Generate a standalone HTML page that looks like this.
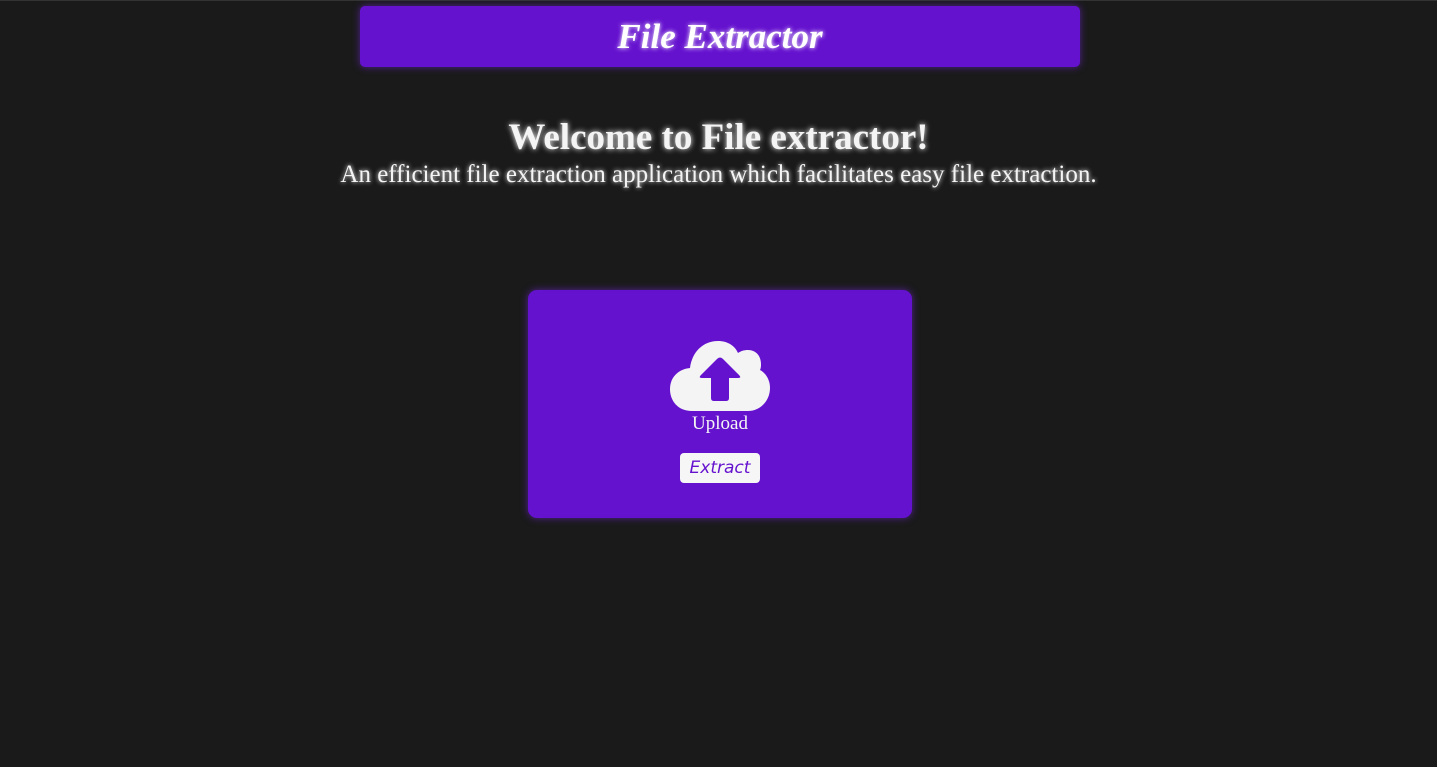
<!DOCTYPE html>
<html><head><meta charset="utf-8"><style>
html,body{margin:0;padding:0;background:#1a1a1a;width:1437px;height:767px;overflow:hidden;font-family:"Liberation Serif",serif;}
body{border-top:1px solid #333;box-sizing:border-box;}
.hdr{position:absolute;left:360px;top:6px;width:720px;height:61px;background:#6512cf;border-radius:5px;box-shadow:0 0 8px rgba(120,40,230,.6);text-align:center;color:#fff;font:italic bold 35px "Liberation Serif",serif;line-height:61px;text-shadow:0 0 5px #fff;}
h1{position:absolute;left:0;width:1437px;top:116px;margin:0;text-align:center;color:#f4f4f4;font:bold 37px "Liberation Serif",serif;text-shadow:0 0 6px #fff;}
.sub{position:absolute;left:0;width:1437px;top:161px;text-align:center;color:#f4f4f4;font:25px "Liberation Serif",serif;text-shadow:0 0 5px #fff;}
.card{position:absolute;left:528px;top:290px;width:384px;height:228px;background:#6512cf;border-radius:9px;box-shadow:0 0 8px rgba(120,40,230,.6);}
.up{position:absolute;left:0;width:384px;top:123px;text-align:center;color:#f4f4f4;font:19px "Liberation Serif",serif;}
.btn{position:absolute;left:152px;top:163px;width:80px;height:30px;background:#f6f6f6;border-radius:4px;color:#6512cf;font:italic 17px "DejaVu Sans",sans-serif;text-align:center;line-height:30px;}
</style></head><body>
<div class="hdr">File Extractor</div>
<h1>Welcome to File extractor!</h1>
<div class="sub">An efficient file extraction application which facilitates easy file extraction.</div>
<div class="card">
<svg style="position:absolute;left:142px;top:51px" width="100" height="70" viewBox="0 0 100 70">
<path fill="#f4f4f4" d="M22 70 C8 70 0 60 0 48 C0 36 9 28 20 27 C22 11 33 0 48 0 C58 0 65 5 68 12 C71 10 74 9 78 9 C86 9 91 15 91 23 C91 25 91 27 90 29 C96 32 100 39 100 47 C100 60 90 70 78 70 Z"/>
<path fill="#6512cf" d="M41 57 L41 37 L32 37 Q28 37 31 34 L47 18 Q50 15 53 18 L69 34 Q72 37 68 37 L59 37 L59 57 Q59 60 56 60 L44 60 Q41 60 41 57 Z"/>
</svg>
<div class="up">Upload</div>
<div class="btn">Extract</div>
</div>
</body></html>
